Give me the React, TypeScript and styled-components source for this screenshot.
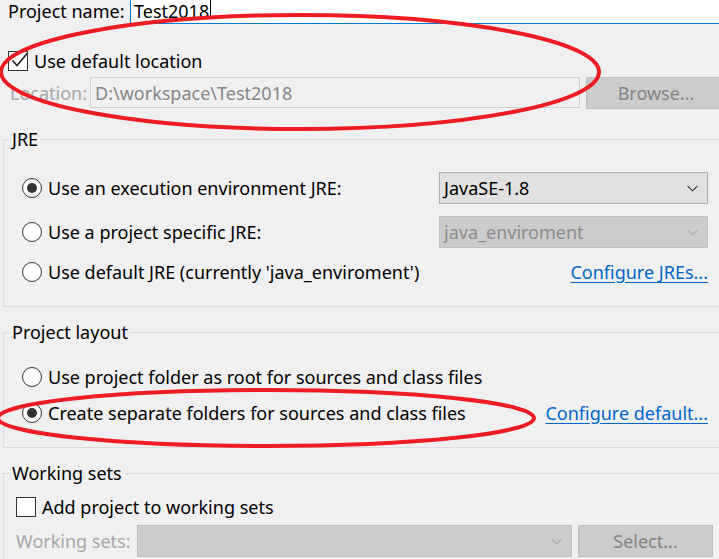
import React from "react";
import styled, { createGlobalStyle } from "styled-components";

const Global = createGlobalStyle`
  html, body { margin: 0; padding: 0; background: #f0f0f0; }
  body { font-family: "Noto Sans", "Open Sans", sans-serif; }
`;

const Page = styled.div`
  position: relative;
  width: 719px;
  height: 559px;
  overflow: hidden;
  background: #f0f0f0;
  color: #000;
  font-family: "Noto Sans", "Open Sans", sans-serif;
  font-size: 18px;
  line-height: 24px;
`;

const NameRow = styled.div`
  display: flex;
  align-items: flex-start;
  height: 24px;
  padding-left: 8px;
  line-height: 22px;
`;

const Label = styled.span<{ $dim?: boolean }>`
  color: ${(p) => (p.$dim ? "#a6a6a6" : "#000")};
  white-space: nowrap;
  flex: 0 0 auto;
`;

const NameLabel = styled(Label)`
  flex: 0 0 122px;
`;

const NameInput = styled.div`
  flex: 0 0 600px;
  height: 24px;
  box-sizing: border-box;
  border: 1px solid #0078d7;
  border-top: none;
  background: #fff;
  display: flex;
  align-items: flex-start;
  padding-left: 3px;
  white-space: nowrap;
`;

const Caret = styled.span`
  display: inline-block;
  width: 1px;
  height: 17px;
  background: #000;
  margin-left: 1px;
`;

const CheckRow = styled.label<{ $top: number; $left: number }>`
  display: flex;
  align-items: center;
  gap: 6px;
  height: 24px;
  margin-top: ${(p) => p.$top}px;
  padding-left: ${(p) => p.$left}px;
  white-space: nowrap;
`;

const Box = styled.span`
  position: relative;
  flex: 0 0 auto;
  width: 20px;
  height: 20px;
  box-sizing: border-box;
  border: 1px solid #333;
  background: #fff;
`;

const CheckMark = styled.svg`
  position: absolute;
  left: 1px;
  top: -2px;
`;

const LocationRow = styled.div`
  display: flex;
  align-items: center;
  height: 31px;
  margin-top: 4px;
  padding-left: 10px;
`;

const LocLabel = styled(Label)`
  flex: 0 0 80px;
`;

const DisabledField = styled.div<{ $width: number }>`
  flex: 0 0 ${(p) => p.$width}px;
  height: 31px;
  box-sizing: border-box;
  border: 1px solid #cfcfcf;
  background: #f0f0f0;
  color: #868686;
  padding-left: 4px;
  display: flex;
  align-items: center;
  white-space: nowrap;
`;

const Button = styled.div<{ $width: number }>`
  flex: 0 0 ${(p) => p.$width}px;
  height: 32px;
  box-sizing: border-box;
  border: 1px solid #bfbfbf;
  background: #cccccc;
  color: #838383;
  display: flex;
  align-items: center;
  justify-content: center;
  margin-left: 6px;
`;

const Group = styled.fieldset<{ $top: number; $pt: number; $pb: number; $pl: number; $pr: number }>`
  margin: ${(p) => p.$top}px 0 0 3px;
  width: 719px;
  box-sizing: border-box;
  border: 1px solid #dcdcdc;
  padding: ${(p) => `${p.$pt}px ${p.$pr}px ${p.$pb}px ${p.$pl}px`};
  min-width: 0;
`;

const Legend = styled.legend<{ $shift: number }>`
  padding: 0 2px;
  margin-left: ${(p) => p.$shift}px;
  line-height: 24px;
`;

const Rows = styled.div<{ $gap: number }>`
  display: grid;
  grid-template-columns: 1fr auto;
  align-items: center;
  row-gap: ${(p) => p.$gap}px;
`;

const RadioLabel = styled.label`
  display: flex;
  align-items: center;
  gap: 6px;
  height: 24px;
  white-space: nowrap;
`;

const RadioRing = styled.span<{ $on?: boolean }>`
  flex: 0 0 auto;
  width: 20px;
  height: 20px;
  box-sizing: border-box;
  border-radius: 50%;
  border: 1px solid #333;
  background: #fff;
  display: flex;
  align-items: center;
  justify-content: center;
  &::after {
    content: "";
    width: 10px;
    height: 10px;
    border-radius: 50%;
    background: ${(p) => (p.$on ? "#333" : "transparent")};
  }
`;

const Combo = styled.div<{ $disabled?: boolean; $width: number }>`
  flex: 0 0 ${(p) => p.$width}px;
  width: ${(p) => p.$width}px;
  height: 32px;
  box-sizing: border-box;
  border: 1px solid ${(p) => (p.$disabled ? "#bfbfbf" : "#adadad")};
  background: ${(p) => (p.$disabled ? "#cccccc" : "#e1e1e1")};
  color: ${(p) => (p.$disabled ? "#8a8a8a" : "#000")};
  display: flex;
  align-items: center;
  justify-content: space-between;
  padding: 0 9px 0 4px;
  white-space: nowrap;
`;

const Link = styled.a`
  color: #0066cc;
  text-decoration: underline;
  text-underline-offset: 3px;
  white-space: nowrap;
  justify-self: end;
`;

const WsRow = styled.div`
  display: flex;
  align-items: center;
  margin-top: 6px;
  height: 32px;
`;

const WsLabel = styled(Label)`
  flex: 0 0 121px;
`;

const Overlay = styled.svg`
  position: absolute;
  left: 0;
  top: 0;
  pointer-events: none;
`;

const Chevron = ({ color }: { color: string }) => (
  <svg width="11" height="7" viewBox="0 0 11 7">
    <path d="M0.5 0.8 L5.5 5.8 L10.5 0.8" fill="none" stroke={color} strokeWidth="1.1" />
  </svg>
);

const Radio = ({ on, children }: { on?: boolean; children: React.ReactNode }) => (
  <RadioLabel>
    <RadioRing $on={on} />
    <span>{children}</span>
  </RadioLabel>
);

export default function App() {
  return (
    <Page>
      <Global />
      <NameRow>
        <NameLabel>Project name:</NameLabel>
        <NameInput>
          <span>Test2018</span>
          <Caret />
        </NameInput>
      </NameRow>

      <CheckRow $top={25} $left={8}>
        <Box>
          <CheckMark width="20" height="20" viewBox="0 0 20 20">
            <path d="M2.5 10.5 L7 15.5 L17.5 3" fill="none" stroke="#222" strokeWidth="1.6" />
          </CheckMark>
        </Box>
        <span>Use default location</span>
      </CheckRow>

      <LocationRow>
        <LocLabel $dim>Location:</LocLabel>
        <DisabledField $width={490}>D:\workspace\Test2018</DisabledField>
        <Button $width={140}>Browse...</Button>
      </LocationRow>

      <Group $top={19} $pt={21} $pb={22} $pl={18} $pr={13}>
        <Legend $shift={-12}>JRE</Legend>
        <Rows $gap={12}>
          <Radio on>Use an execution environment JRE:</Radio>
          <Combo $width={269}>
            <span>JavaSE-1.8</span>
            <Chevron color="#333" />
          </Combo>
          <Radio>Use a project specific JRE:</Radio>
          <Combo $width={269} $disabled>
            <span>java_enviroment</span>
            <Chevron color="#a8a8a8" />
          </Combo>
          <Radio>Use default JRE (currently 'java_enviroment')</Radio>
          <Link>Configure JREs...</Link>
        </Rows>
      </Group>

      <Group $top={13} $pt={21} $pb={22} $pl={18} $pr={13}>
        <Legend $shift={-12}>Project layout</Legend>
        <Rows $gap={12}>
          <Radio>Use project folder as root for sources and class files</Radio>
          <span />
          <Radio on>Create separate folders for sources and class files</Radio>
          <Link>Configure default...</Link>
        </Rows>
      </Group>

      <Group $top={13} $pt={10} $pb={10} $pl={12} $pr={8}>
        <Legend $shift={-6}>Working sets</Legend>
        <CheckRow $top={0} $left={0}>
          <Box />
          <span>Add project to working sets</span>
        </CheckRow>
        <WsRow>
          <WsLabel $dim>Working sets:</WsLabel>
          <Combo $width={435} $disabled>
            <span />
            <Chevron color="#a8a8a8" />
          </Combo>
          <Button $width={135}>Select...</Button>
        </WsRow>
      </Group>

      <Overlay width="719" height="559" viewBox="0 0 719 559">
        <ellipse cx="300" cy="72" rx="299" ry="57" fill="none" stroke="#ed1c24" strokeWidth="4" />
        <ellipse cx="266" cy="418" rx="268" ry="28" fill="none" stroke="#ed1c24" strokeWidth="4" />
      </Overlay>
    </Page>
  );
}
